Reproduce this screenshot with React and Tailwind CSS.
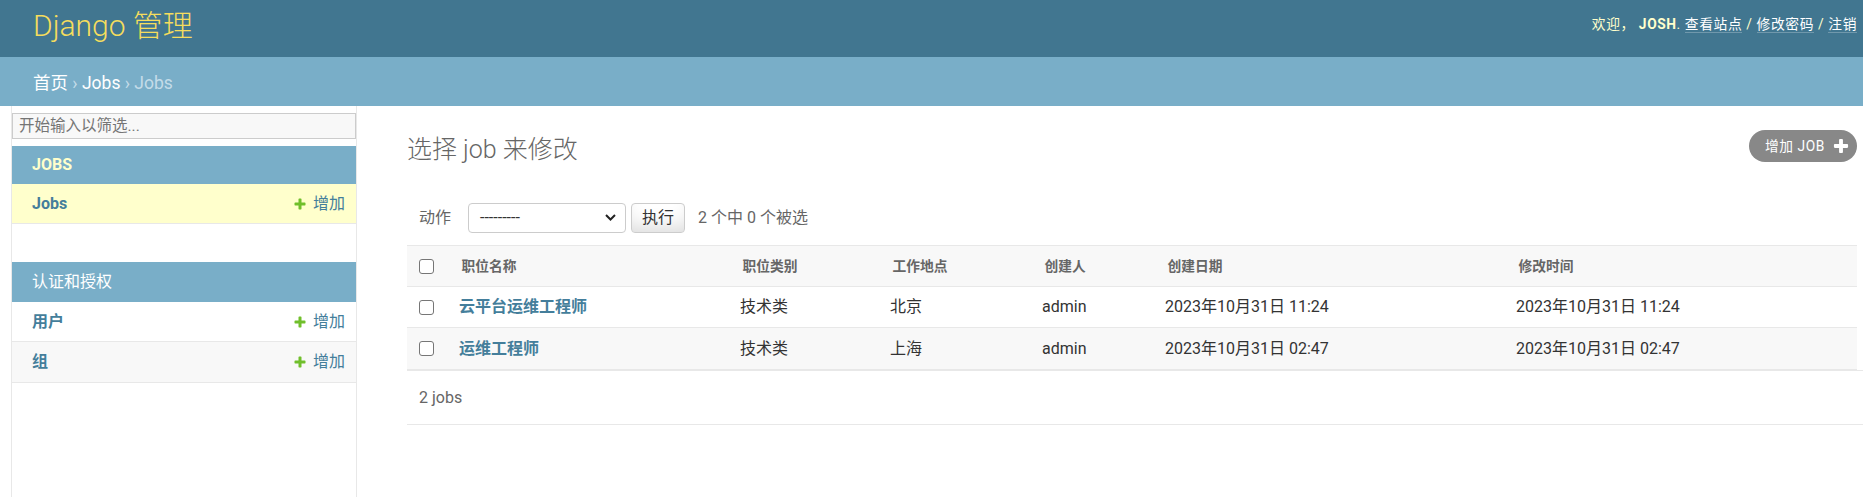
const PLUS_PATH =
  "M1600 796v192q0 40-28 68t-68 28h-416v416q0 40-28 68t-68 28h-192q-40 0-68-28t-28-68v-416h-416q-40 0-68-28t-28-68v-192q0-40 28-68t68-28h416v-416q0-40 28-68t68-28h192q40 0 68 28t28 68v416h416q40 0 68 28t28 68z";

function Plus({ size, color }) {
  return (
    <svg width={size} height={size} viewBox="0 0 1792 1792" className="shrink-0">
      <path fill={color} d={PLUS_PATH} />
    </svg>
  );
}

function Checkbox() {
  return <span className="block w-[15px] h-[15px] border-[1.5px] border-[#767676] rounded-[3px] bg-white" />;
}

function AddLink() {
  return (
    <span className="flex items-center text-[#447e9b]">
      <Plus size={14} color="#70bf2b" />
      <span className="ml-[6px]">增加</span>
    </span>
  );
}

const rows = [
  { name: "云平台运维工程师", type: "技术类", city: "北京", by: "admin", created: "2023年10月31日 11:24", modified: "2023年10月31日 11:24" },
  { name: "运维工程师", type: "技术类", city: "上海", by: "admin", created: "2023年10月31日 02:47", modified: "2023年10月31日 02:47" },
];

const cols = "grid grid-cols-[42px_281px_150px_152px_123px_351px_1fr] items-center";

export default function App() {
  return (
    <div className="min-h-screen flex flex-col overflow-hidden bg-white font-['Roboto','Noto_Sans_CJK_SC',sans-serif] text-[#333]">
      <header className="h-[57px] shrink-0 bg-[#417690] flex items-center justify-between pl-[33px] pr-[6px]">
        <div className="text-[30px] font-light text-[#f5dd5d] leading-none pb-[6px]">Django 管理</div>
        <div className="text-[13.75px] leading-[20px] tracking-[0.6px] text-[#ffc] uppercase pb-[9px] whitespace-nowrap">
          欢迎， <strong className="font-bold">JOSH</strong>.{" "}
          <a className="text-white border-b border-white/25">查看站点</a> /{" "}
          <a className="text-white border-b border-white/25">修改密码</a> /{" "}
          <a className="text-white border-b border-white/25">注销</a>
        </div>
      </header>

      <div className="h-[49px] shrink-0 bg-[#79aec8] flex items-center pl-[33px] pt-[4px] text-[17.5px] text-[#c4dce8] whitespace-pre">
        <a className="text-white">首页</a>
        <span> › </span>
        <a className="text-white">Jobs</a>
        <span> › Jobs</span>
      </div>

      <div className="flex flex-1">
        <div className="w-[12px] shrink-0 border-r border-[#e8e8e8]" />
        <nav className="w-[345px] shrink-0 border-r border-[#e8e8e8] text-[16px]">
          <input
            placeholder="开始输入以筛选..."
            className="block w-full mt-[7px] mb-[7px] h-[26px] border border-[#ccc] bg-[#f8f8f8] px-[6px] text-[15.5px] text-[#333] placeholder:text-[#757575] outline-none"
          />
          <div className="h-[38px] bg-[#79aec8] flex items-center pl-[20px] font-bold text-[#ffc]">JOBS</div>
          <div className="h-[40px] bg-[#ffc] border-b border-[#e8e8e8] flex items-center justify-between pl-[20px] pr-[11px]">
            <span className="font-bold text-[#447e9b]">Jobs</span>
            <AddLink />
          </div>

          <div className="mt-[38px] h-[40px] bg-[#79aec8] flex items-center pl-[20px] text-white">认证和授权</div>
          <div className="h-[40px] bg-white border-b border-[#e8e8e8] flex items-center justify-between pl-[20px] pr-[11px]">
            <span className="font-bold text-[#447e9b]">用户</span>
            <AddLink />
          </div>
          <div className="h-[41px] bg-[#f8f8f8] border-b border-[#e8e8e8] flex items-center justify-between pl-[20px] pr-[11px]">
            <span className="font-bold text-[#447e9b]">组</span>
            <AddLink />
          </div>
        </nav>

        <main className="flex-1 min-w-0 pl-[50px] pr-[6px] pt-[24px]">
          <div className="flex justify-between items-center h-[32px]">
            <h1 className="text-[25px] font-light text-[#666] leading-[32px] pt-[8px]">选择 job 来修改</h1>
            <a className="flex items-center h-[32px] rounded-full bg-[#888] pl-[16px] pr-[7px] text-white text-[13.75px] tracking-[0.6px] uppercase whitespace-nowrap">
              增加 JOB
              <span className="ml-[7px] flex">
                <Plus size={18} color="#ffffff" />
              </span>
            </a>
          </div>

          <div className="mt-[28px] h-[55px] flex items-center pl-[12px] text-[16px] text-[#666]">
            <span>动作</span>
            <div className="ml-[17px] w-[158px] h-[30px] border border-[#ccc] rounded-[4px] bg-white flex items-center justify-between pl-[11px] pr-[9px] text-[#333]">
              <span>---------</span>
              <svg width="11" height="7" viewBox="0 0 11 7">
                <polyline points="1,1 5.5,5.5 10,1" fill="none" stroke="#222" strokeWidth="2" />
              </svg>
            </div>
            <div className="ml-[5px] w-[54px] h-[30px] border border-[#ccc] rounded-[4px] bg-white shadow-[inset_0_-15px_20px_-10px_rgba(0,0,0,0.15)] flex items-center justify-center text-[#333]">
              执行
            </div>
            <span className="ml-[13px]">2 个中 0 个被选</span>
          </div>

          <div className={`${cols} h-[42px] border-y border-[#e8e8e8] bg-[#f8f8f8] text-[13.75px] font-bold text-[#666]`}>
            <div className="pl-[12px]"><Checkbox /></div>
            <div className="pl-[12.5px]">职位名称</div>
            <div className="pl-[12.5px]">职位类别</div>
            <div className="pl-[12.5px]">工作地点</div>
            <div className="pl-[12.5px]">创建人</div>
            <div className="pl-[12.5px]">创建日期</div>
            <div className="pl-[12.5px]">修改时间</div>
          </div>

          {rows.map((r, i) => (
            <div
              key={i}
              className={`${cols} ${i === 0 ? "h-[41px] bg-white" : "h-[42px] bg-[#f8f8f8]"} border-b border-[#e8e8e8] text-[16px] text-[#333]`}
            >
              <div className="pl-[12px]"><Checkbox /></div>
              <div className="pl-[10px] font-bold text-[#447e9b]">{r.name}</div>
              <div className="pl-[10px]">{r.type}</div>
              <div className="pl-[10px]">{r.city}</div>
              <div className="pl-[10px]">{r.by}</div>
              <div className="pl-[10px]">{r.created}</div>
              <div className="pl-[10px]">{r.modified}</div>
            </div>
          ))}

          <div className="-mr-[6px] h-[55px] border-y border-[#e8e8e8] flex items-center pl-[12px] text-[16px] text-[#666]">
            2 jobs
          </div>
        </main>
      </div>
    </div>
  );
}
